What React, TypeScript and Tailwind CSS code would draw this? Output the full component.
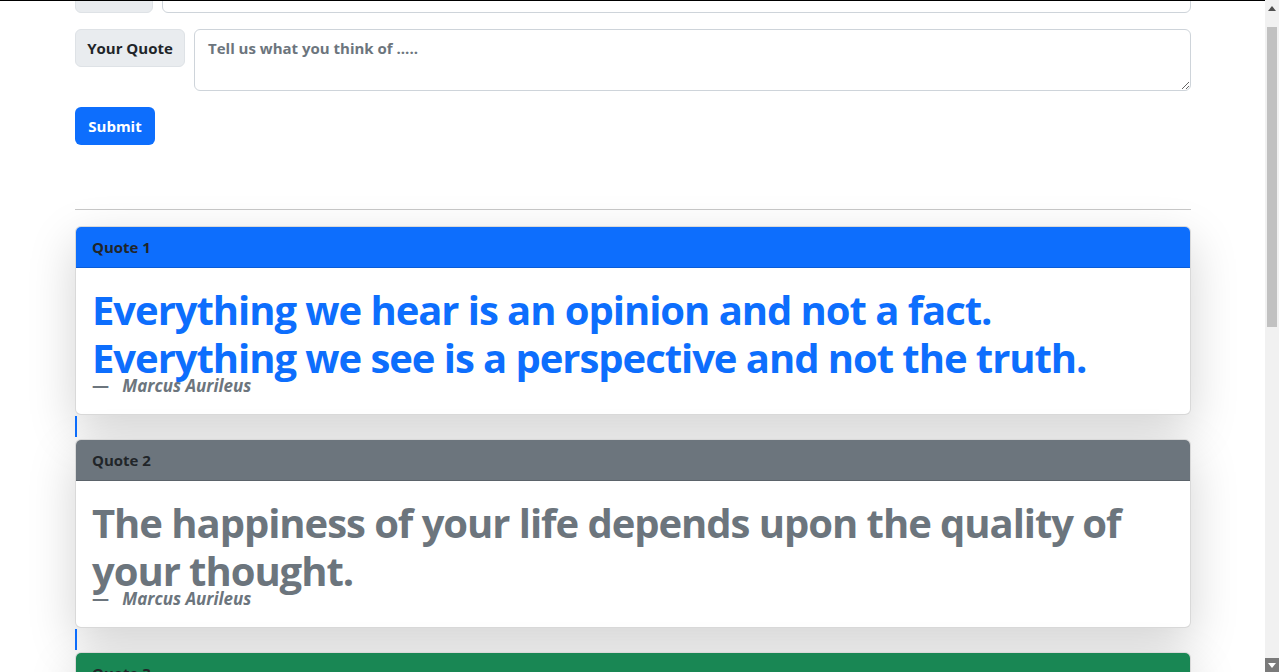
const quotes = [
    {
        id: 1,
        text: 'Everything we hear is an opinion and not a fact. Everything we see is a perspective and not the truth.',
        author: 'Marcus Aurileus',
        header: 'bg-[#0d6efd]',
        color: 'text-[#0d6efd]',
    },
    {
        id: 2,
        text: 'The happiness of your life depends upon the quality of your thought.',
        author: 'Marcus Aurileus',
        header: 'bg-[#6c757d]',
        color: 'text-[#6c757d]',
    },
    {
        id: 3,
        text: 'You have power over your mind - not outside events.',
        author: 'Marcus Aurileus',
        header: 'bg-[#198754]',
        color: 'text-[#198754]',
    },
];

function QuoteCard({ quote }: { quote: (typeof quotes)[number] }) {
    return (
        <div className="overflow-hidden rounded-md border border-black/15 bg-white shadow-[0_1rem_3rem_rgba(0,0,0,0.175)]">
            <div className={`${quote.header} h-[41px] border-b border-black/15 px-4 py-[9px] text-[15px] leading-[22px] font-bold text-[#212529]`}>
                Quote {quote.id}
            </div>
            <div className="px-4 pt-[18px] pb-4">
                <h1 className={`${quote.color} text-[40px] leading-[48px] font-bold tracking-[-1.05px]`}>{quote.text}</h1>
                <p className="-mt-[8px] text-[17px] leading-6 font-bold text-[#6c757d] italic">
                    <span className="not-italic">—</span>&nbsp;&nbsp; {quote.author}
                </p>
            </div>
        </div>
    );
}

export default function App() {
    return (
        <div className="flex h-screen overflow-hidden bg-white font-['Open_Sans','Noto_Sans',sans-serif] text-[#212529]">
            <div className="relative min-w-0 flex-1 overflow-hidden">
                <div className="absolute top-0 right-0 left-0 z-10 h-px bg-black" />
                <div className="mx-[75px] -mt-[25px] w-[1116px]">
                    <form className="flex flex-col gap-4">
                        <div className="flex items-start gap-[9px]">
                            <span className="flex h-[38px] w-[78px] items-center justify-center rounded-md border border-[#dee2e6] bg-[#e9ecef] text-[15px] font-bold">
                                Author
                            </span>
                            <input
                                className="h-[38px] flex-1 rounded-md border border-[#ced4da] px-3 text-[15px] font-bold"
                                placeholder="Who said it?"
                            />
                        </div>
                        <div className="flex items-start gap-[9px]">
                            <span className="flex h-[38px] w-[110px] items-center justify-center rounded-md border border-[#dee2e6] bg-[#e9ecef] text-[15px] font-bold">
                                Your Quote
                            </span>
                            <textarea
                                className="h-[62px] flex-1 rounded-md border border-[#ced4da] px-[13px] py-[7px] text-[15px] font-bold placeholder:text-[#6c757d]"
                                placeholder="Tell us what you think of ....."
                            />
                        </div>
                        <button
                            type="button"
                            className="h-[38px] w-[80px] rounded-md bg-[#0d6efd] text-[15px] font-bold text-white"
                        >
                            Submit
                        </button>
                    </form>
                    <hr className="mt-[64px] border-t border-[#c8c8c8]" />
                    <div className="mt-4 flex flex-col">
                        {quotes.map((q) => (
                            <div key={q.id}>
                                <QuoteCard quote={q} />
                                <div className="mt-px mb-[2px] h-[21px] border-l-2 border-[#0d6efd]" />
                            </div>
                        ))}
                    </div>
                </div>
            </div>
            <div className="flex w-[14px] flex-col bg-[#f1f1f1]">
                <div className="flex h-[17px] items-center justify-center">
                    <svg width="8" height="5" viewBox="0 0 8 5">
                        <path d="M4 0 L8 5 L0 5 Z" fill="#505050" />
                    </svg>
                </div>
                <div className="mx-[2px] mt-[10px] h-[300px] bg-[#c1c1c1]" />
                <div className="flex-1" />
                <div className="flex h-[14px] items-center justify-center bg-[#7a7a7a]">
                    <svg width="8" height="5" viewBox="0 0 8 5">
                        <path d="M0 0 L8 0 L4 5 Z" fill="#ffffff" />
                    </svg>
                </div>
            </div>
        </div>
    );
}
